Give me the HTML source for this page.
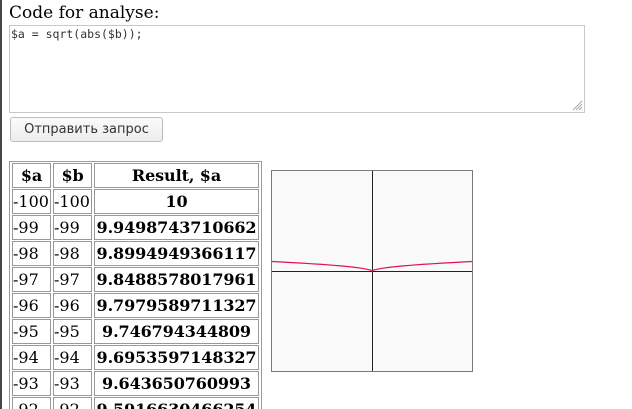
<!DOCTYPE html>
<html><head><meta charset="utf-8"><style>
html,body{margin:0;width:632px;height:409px;overflow:hidden}
body{background:#fff;position:relative;font-family:"DejaVu Serif","Liberation Serif",serif}
.lb{position:absolute;left:0;top:0;width:2px;height:409px;background:#4a4442}
.h{position:absolute;left:9px;top:3px;font-size:17px;color:#000;line-height:20px}
.ta{position:absolute;left:9px;top:25px;width:574px;height:86px;border:1px solid #c8c8c8;box-sizing:content-box}
.ta span{position:absolute;left:1px;top:1px;font:11.5px "DejaVu Sans Mono",monospace;color:#333}
.btn{position:absolute;left:10px;top:117px;width:153px;height:25px;border:1px solid #bdbdbd;border-radius:3px;background:linear-gradient(#fbfbfb,#ececec);font:13px "DejaVu Sans",sans-serif;color:#333;text-align:center;line-height:23px;box-sizing:border-box}
.tb{position:absolute;left:9px;top:161px;width:253px;height:260px;border:1px solid #999;box-sizing:border-box}
.c{position:absolute;border:1px solid #999;box-sizing:border-box;height:25px;font-size:16px;line-height:23px;color:#000;white-space:nowrap;overflow:hidden}
.c.b{font-weight:bold;text-align:center;letter-spacing:-0.1px}
.c.l{padding-left:0}
</style></head><body>
<div class="lb"></div>
<div class="h">Code for analyse:</div>
<div class="ta"><span>$a = sqrt(abs($b));</span>
<svg style="position:absolute;right:1px;bottom:1px" width="12" height="12"><path d="M11 2L2 11M11 5L5 11M11 8L8 11" stroke="#aaa" stroke-width="1"/></svg></div>
<div class="btn">Отправить запрос</div>
<div class="tb"></div>
<div class="c b" style="left:12px;top:163px;width:39px">$a</div>
<div class="c b" style="left:53px;top:163px;width:39px">$b</div>
<div class="c b" style="left:94px;top:163px;width:165px">Result, $a</div>

<div class="c l" style="left:12px;top:189px;width:39px">-100</div><div class="c l" style="left:53px;top:189px;width:39px">-100</div><div class="c b" style="left:94px;top:189px;width:165px">10</div>
<div class="c l" style="left:12px;top:215px;width:39px">-99</div><div class="c l" style="left:53px;top:215px;width:39px">-99</div><div class="c b" style="left:94px;top:215px;width:165px">9.9498743710662</div>
<div class="c l" style="left:12px;top:241px;width:39px">-98</div><div class="c l" style="left:53px;top:241px;width:39px">-98</div><div class="c b" style="left:94px;top:241px;width:165px">9.8994949366117</div>
<div class="c l" style="left:12px;top:267px;width:39px">-97</div><div class="c l" style="left:53px;top:267px;width:39px">-97</div><div class="c b" style="left:94px;top:267px;width:165px">9.8488578017961</div>
<div class="c l" style="left:12px;top:293px;width:39px">-96</div><div class="c l" style="left:53px;top:293px;width:39px">-96</div><div class="c b" style="left:94px;top:293px;width:165px">9.7979589711327</div>
<div class="c l" style="left:12px;top:319px;width:39px">-95</div><div class="c l" style="left:53px;top:319px;width:39px">-95</div><div class="c b" style="left:94px;top:319px;width:165px">9.746794344809</div>
<div class="c l" style="left:12px;top:345px;width:39px">-94</div><div class="c l" style="left:53px;top:345px;width:39px">-94</div><div class="c b" style="left:94px;top:345px;width:165px">9.6953597148327</div>
<div class="c l" style="left:12px;top:371px;width:39px">-93</div><div class="c l" style="left:53px;top:371px;width:39px">-93</div><div class="c b" style="left:94px;top:371px;width:165px">9.643650760993</div>
<div class="c l" style="left:12px;top:397px;width:39px">-92</div><div class="c l" style="left:53px;top:397px;width:39px">-92</div><div class="c b" style="left:94px;top:397px;width:165px">9.5916630466254</div>

<svg style="position:absolute;left:271px;top:170px" width="202" height="202">
<rect x="0.5" y="0.5" width="201" height="201" fill="#f9f9f9" stroke="#7a7a7a"/>
<line x1="101.5" y1="1" x2="101.5" y2="201" stroke="#222"/>
<line x1="1" y1="101.5" x2="201" y2="101.5" stroke="#222"/>
<polyline fill="none" stroke="#e0105a" stroke-width="1.2" points="1,91.5 11,92 21,92.6 31,93.1 41,93.8 51,94.4 61,95.2 71,96 81,97 91,98.3 96,99.3 99.5,100.1 101,101 102.5,100.1 106,99.3 111,98.3 121,97 131,96 141,95.2 151,94.4 161,93.8 171,93.1 181,92.6 191,92 201,91.5"/>
</svg>
</body></html>
